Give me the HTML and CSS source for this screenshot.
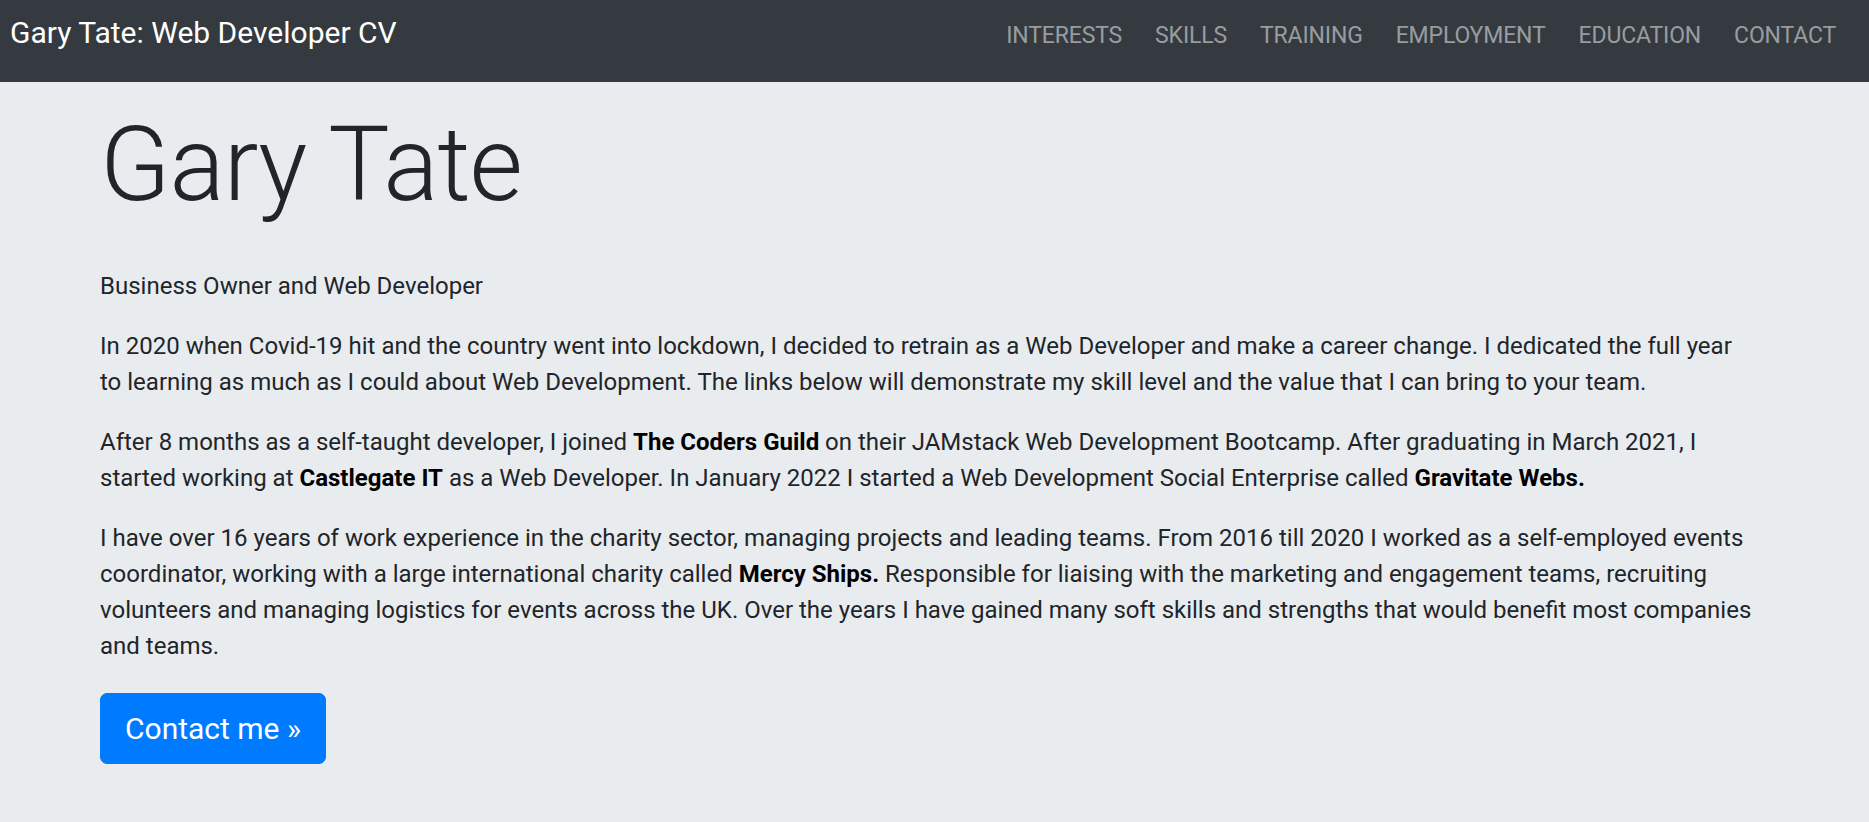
FILE: index.html
```html
<!DOCTYPE html>
<html lang="en">
<head>
<meta charset="utf-8">
<title>Gary Tate: Web Developer CV</title>
<link rel="stylesheet" href="styles.css">
</head>
<body>
<nav class="navbar">
  <a class="brand" href="#">Gary Tate: Web Developer CV</a>
  <ul class="nav">
    <li><a href="#interests">INTERESTS</a></li>
    <li><a href="#skills">SKILLS</a></li>
    <li><a href="#training">TRAINING</a></li>
    <li><a href="#employment">EMPLOYMENT</a></li>
    <li><a href="#education">EDUCATION</a></li>
    <li><a href="#contact">CONTACT</a></li>
  </ul>
</nav>
<main class="jumbotron">
  <div class="container">
    <h1 class="display">Gary Tate</h1>
    <p>Business Owner and Web Developer</p>
    <p>In 2020 when Covid-19 hit and the country went into lockdown, I decided to retrain as a Web Developer and make a career change. I dedicated the full year to learning as much as I could about Web Development. The links below will demonstrate my skill level and the value that I can bring to your team.</p>
    <p>After 8 months as a self-taught developer, I joined <b>The Coders Guild</b> on their JAMstack Web Development Bootcamp. After graduating in March 2021, I started working at <b>Castlegate IT</b> as a Web Developer. In January 2022 I started a Web Development Social Enterprise called <b>Gravitate Webs.</b></p>
    <p>I have over 16 years of work experience in the charity sector, managing projects and leading teams. From 2016 till 2020 I worked as a self-employed events coordinator, working with a large international charity called <b>Mercy Ships.</b> Responsible for liaising with the marketing and engagement teams, recruiting volunteers and managing logistics for events across the UK. Over the years I have gained many soft skills and strengths that would benefit most companies and teams.</p>
    <div class="actions"><a class="btn" href="#contact">Contact me &raquo;</a></div>
  </div>
</main>
</body>
</html>
```
FILE: styles.css
```css
* { box-sizing: border-box; }
html, body { margin: 0; padding: 0; }
body {
  font-family: Roboto, "Liberation Sans", sans-serif;
  font-size: 24px;
  line-height: 36px;
  color: #212529;
  background: #e9ecef;
}
a { text-decoration: none; }

.navbar {
  height: 82px;
  background: #343a40;
  display: flex;
  align-items: baseline;
  justify-content: space-between;
  padding: 10px 33px 0 10px;
}
.brand {
  color: #fff;
  font-size: 30px;
  line-height: 45px;
}
.nav {
  list-style: none;
  margin: 0;
  padding: 0;
  display: flex;
  gap: 33px;
}
.nav a {
  color: rgba(255, 255, 255, 0.5);
  font-size: 23px;
  line-height: 36px;
  letter-spacing: -0.15px;
}

.jumbotron {
  padding: 0 100px 40px;
}
.container {
  max-width: 1654px;
}
.display {
  font-size: 103px;
  font-weight: 300;
  line-height: 130px;
  margin: 18px 0 38px;
  letter-spacing: -1px;
}
p {
  margin: 0 0 24px;
}
b { color: #000; font-weight: 700; }
.actions { padding-top: 5px; }
.btn {
  display: inline-block;
  background: #007bff;
  border: 1.5px solid #007bff;
  color: #fff;
  font-size: 30px;
  line-height: 45px;
  padding: 12px 24px;
  border-radius: 7px;
}
```
